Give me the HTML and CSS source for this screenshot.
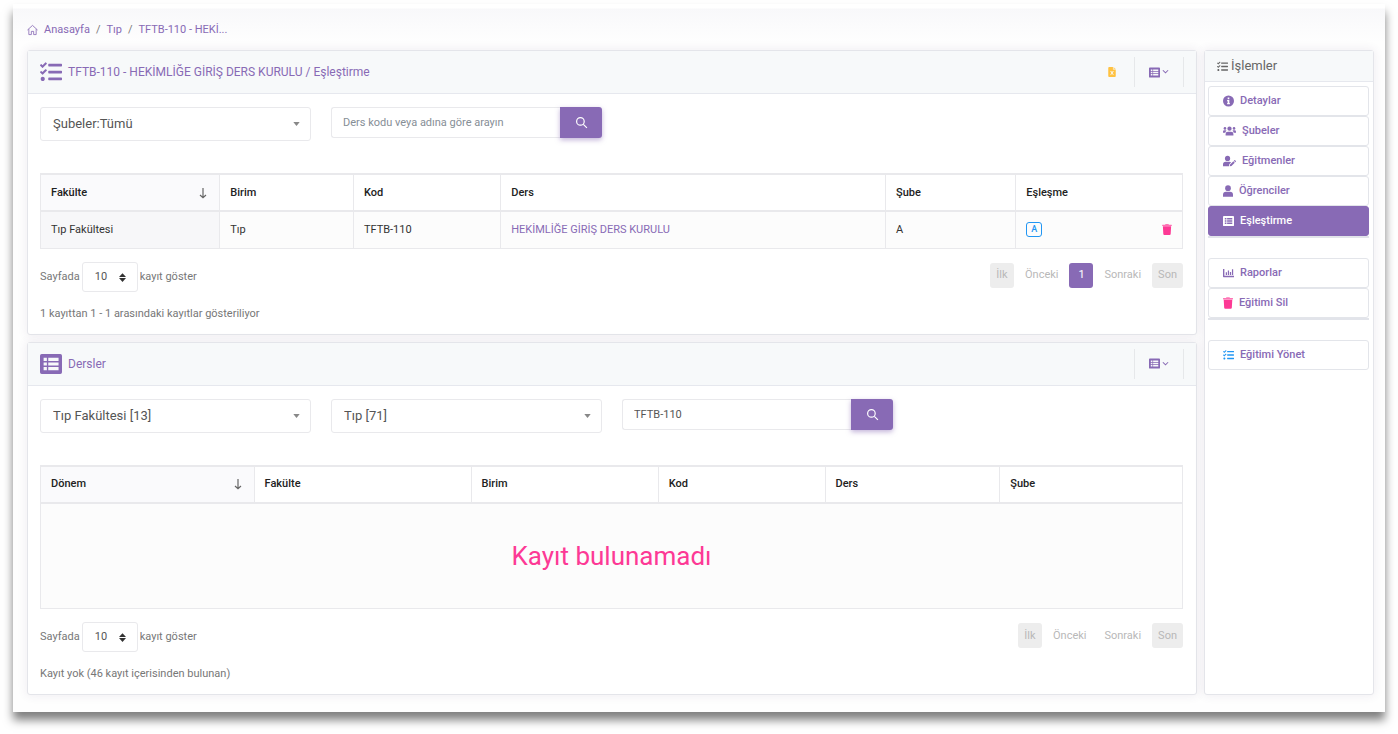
FILE: index.html
```html
<!DOCTYPE html>
<html lang="tr">
<head>
<meta charset="utf-8">
<title>TFTB-110 - Eşleştirme</title>
<link rel="stylesheet" href="styles.css">
</head>
<body>
<svg class="sprite" aria-hidden="true">
  <symbol id="i-list-alt" viewBox="0 0 512 512"><path fill-rule="evenodd" d="M40 24h432a40 40 0 0 1 40 40v384a40 40 0 0 1-40 40H40a40 40 0 0 1-40-40V64a40 40 0 0 1 40-40zM84 112v72h76v-72zm0 108v72h76v-72zm0 108v72h76v-72zM192 112v72h240v-72zm0 108v72h240v-72zm0 108v72h240v-72z"/></symbol>
  <symbol id="i-tasks" viewBox="0 0 512 512"><path d="M139.600 35.500a12 12 0 0 0-17 0L58.900 98.800l-22.700-22.100a12 12 0 0 0-17 0L3.500 92.400a12 12 0 0 0 0 17l47.600 47.400a12.800 12.800 0 0 0 17.600 0l15.600-15.600L156.500 69a12 12 0 0 0 0-17zm0 159.200a12 12 0 0 0-17 0l-63.700 63.700-22.700-22.100a12 12 0 0 0-17 0L3.500 252a12 12 0 0 0 0 17l47.600 47.600a12.800 12.800 0 0 0 17.600 0l87.800-88.100a12 12 0 0 0 0-17zM64 368c-26.500 0-48 21.500-48 48s21.500 48 48 48 48-21.500 48-48-21.500-48-48-48zm432 16H208a16 16 0 0 0-16 16v32a16 16 0 0 0 16 16h288a16 16 0 0 0 16-16v-32a16 16 0 0 0-16-16zm0-320H208a16 16 0 0 0-16 16v32a16 16 0 0 0 16 16h288a16 16 0 0 0 16-16V80a16 16 0 0 0-16-16zm0 160H208a16 16 0 0 0-16 16v32a16 16 0 0 0 16 16h288a16 16 0 0 0 16-16v-32a16 16 0 0 0-16-16z"/></symbol>
  <symbol id="i-trash" viewBox="0 0 448 512"><path d="M432 32H312l-9-19A24 24 0 0 0 281 0H167a24 24 0 0 0-22 13l-9 19H16A16 16 0 0 0 0 48v32a16 16 0 0 0 16 16h416a16 16 0 0 0 16-16V48a16 16 0 0 0-16-16z" opacity=".7"/><path d="M32 110l21 357a48 48 0 0 0 48 45h246a48 48 0 0 0 48-45l21-357z"/></symbol>
  <symbol id="i-search" viewBox="0 0 24 24"><path d="M10 3a7 7 0 1 0 0 14 7 7 0 0 0 0-14zM15 15l7 7" fill="none" stroke="currentColor" stroke-width="2.200"/></symbol>
  <symbol id="i-caret" viewBox="0 0 8 5"><path d="M0 0h8L4 5z"/></symbol>
  <symbol id="i-sort" viewBox="0 0 8 10"><path d="M4 0l4 4.400H0zM4 10L0 5.600h8z"/></symbol>
  <symbol id="i-arrow" viewBox="0 0 8 12"><path d="M4 1v9.500M1 8l3 2.800L7 8" fill="none" stroke="currentColor" stroke-width="1.200"/></symbol>
  <symbol id="i-chevron" viewBox="0 0 8 6"><path d="M1 1l3 3 3-3" fill="none" stroke="currentColor" stroke-width="1.200"/></symbol>
</svg>
<div class="sheet">
  <nav class="crumbs" aria-label="Konum">
    <svg class="crumb-home" viewBox="0 0 24 24"><path d="M1 12L12 2l11 10M4 10v12h5.500v-7h5v7H20V10" fill="none" stroke="currentColor" stroke-width="1.800" stroke-linejoin="round"/></svg>
    <a href="#">Anasayfa</a><span>/</span><a href="#">Tıp</a><span>/</span><a href="#">TFTB-110 - HEKİ...</a>
  </nav>
  <div class="layout">
    <main class="main">
      <section class="card">
        <header class="card-head">
          <svg class="head-icon"><use href="#i-tasks"/></svg>
          <h2>TFTB-110 - HEKİMLİĞE GİRİŞ DERS KURULU / Eşleştirme</h2>
          <div class="tools">
            <button class="tool-export" type="button" aria-label="Excel"><svg viewBox="0 0 384 512"><path fill-rule="evenodd" d="M48 0h192v128h144v336a48 48 0 0 1-48 48H48a48 48 0 0 1-48-48V48A48 48 0 0 1 48 0zM100 210l62 94-66 98h54l42-66 42 66h54l-66-98 62-94h-52l-40 62-40-62z"/><path d="M264 0l120 104h-120z" opacity=".7"/></svg></button>
            <button class="tool-menu" type="button" aria-label="Menü"><svg class="menu-list"><use href="#i-list-alt"/></svg><svg class="menu-chev"><use href="#i-chevron"/></svg></button>
          </div>
        </header>
        <div class="card-body">
          <form class="filters">
            <div class="pick"><select aria-label="Şubeler"><option>Şubeler:Tümü</option></select><svg><use href="#i-caret"/></svg></div>
            <div class="search"><input type="text" aria-label="Ders ara" placeholder="Ders kodu veya adına göre arayın"><button type="button" aria-label="Ara"><svg><use href="#i-search"/></svg></button></div>
          </form>
          <table class="grid grid-match">
            <colgroup><col class="m1"><col class="m2"><col class="m3"><col class="m4"><col class="m5"><col class="m6"></colgroup>
            <thead><tr><th class="sorted"><div class="spread">Fakülte<svg class="arrow"><use href="#i-arrow"/></svg></div></th><th>Birim</th><th>Kod</th><th>Ders</th><th>Şube</th><th>Eşleşme</th></tr></thead>
            <tbody><tr><td class="sorted">Tıp Fakültesi</td><td>Tıp</td><td>TFTB-110</td><td><a href="#">HEKİMLİĞE GİRİŞ DERS KURULU</a></td><td>A</td><td><div class="spread"><span class="tag">A</span><button class="del" type="button" aria-label="Sil"><svg><use href="#i-trash"/></svg></button></div></td></tr></tbody>
          </table>
          <div class="table-foot">
            <label class="length">Sayfada <span class="pick-small"><select><option>10</option></select><svg><use href="#i-sort"/></svg></span> kayıt göster</label>
            <div class="pager"><button type="button" class="edge">İlk</button><button type="button">Önceki</button><button type="button" class="current">1</button><button type="button">Sonraki</button><button type="button" class="edge">Son</button></div>
          </div>
          <p class="info">1 kayıttan 1 - 1 arasındaki kayıtlar gösteriliyor</p>
        </div>
      </section>
      <section class="card grow">
        <header class="card-head">
          <svg class="head-icon"><use href="#i-list-alt"/></svg>
          <h2>Dersler</h2>
          <div class="tools">
            <button class="tool-menu" type="button" aria-label="Menü"><svg class="menu-list"><use href="#i-list-alt"/></svg><svg class="menu-chev"><use href="#i-chevron"/></svg></button>
          </div>
        </header>
        <div class="card-body">
          <form class="filters">
            <div class="pick"><select aria-label="Fakülte"><option>Tıp Fakültesi [13]</option></select><svg><use href="#i-caret"/></svg></div>
            <div class="pick"><select aria-label="Birim"><option>Tıp [71]</option></select><svg><use href="#i-caret"/></svg></div>
            <div class="search"><input type="text" aria-label="Ders ara" value="TFTB-110"><button type="button" aria-label="Ara"><svg><use href="#i-search"/></svg></button></div>
          </form>
          <table class="grid grid-courses">
            <colgroup><col class="c1"><col class="c2"><col class="c3"><col class="c4"><col class="c5"><col class="c6"></colgroup>
            <thead><tr><th class="sorted"><div class="spread">Dönem<svg class="arrow"><use href="#i-arrow"/></svg></div></th><th>Fakülte</th><th>Birim</th><th>Kod</th><th>Ders</th><th>Şube</th></tr></thead>
            <tbody><tr><td class="empty" colspan="6">Kayıt bulunamadı</td></tr></tbody>
          </table>
          <div class="table-foot">
            <label class="length">Sayfada <span class="pick-small"><select><option>10</option></select><svg><use href="#i-sort"/></svg></span> kayıt göster</label>
            <div class="pager"><button type="button" class="edge">İlk</button><button type="button">Önceki</button><button type="button">Sonraki</button><button type="button" class="edge">Son</button></div>
          </div>
          <p class="info">Kayıt yok (46 kayıt içerisinden bulunan)</p>
        </div>
      </section>
    </main>
    <aside class="side">
      <h3><svg><use href="#i-tasks"/></svg>İşlemler</h3>
      <div class="group ruled">
        <a href="#"><svg class="sq" viewBox="0 0 16 16"><path fill-rule="evenodd" d="M8 0a8 8 0 1 0 0 16A8 8 0 0 0 8 0zM6.800 3h2.400v2.400H6.800zM6 6.500h3.200V11H10v1.800H6V11h.8V8.300H6z"/></svg>Detaylar</a>
        <a href="#"><svg class="wide" viewBox="0 0 20 16"><circle cx="3" cy="4" r="2"/><circle cx="17" cy="4" r="2"/><circle cx="10" cy="4.500" r="3.300"/><path d="M0 10.500V9a2 2 0 0 1 2-2h2q1 0 1.500.6Q3.800 8.700 3.600 10.500zM20 10.500V9a2 2 0 0 0-2-2h-2q-1 0-1.500.6 1.700 1.100 1.900 2.900zM4 15v-2.500A3.500 3.500 0 0 1 7.500 9h5a3.500 3.500 0 0 1 3.500 3.500V15z"/></svg>Şubeler</a>
        <a href="#"><svg class="wide" viewBox="0 0 20 16"><circle cx="7" cy="4" r="4"/><path d="M0 16v-2.800A4.200 4.200 0 0 1 4.200 9h5.600q1.500 0 2.700 1l-2.800 2.900L9.300 16zM10.500 16l.4-2.500L16 8.400l2.100 2.100-5.100 5.100zM16.700 7.700l.8-.8q.6-.5 1.200 0l1 1q.5.600 0 1.200l-.8.8z"/></svg>Eğitmenler</a>
        <a href="#"><svg class="slim" viewBox="0 0 14 16"><circle cx="7" cy="4" r="4"/><path d="M0 16v-2.800A4.200 4.200 0 0 1 4.200 9h5.600a4.200 4.200 0 0 1 4.200 4.200V16z"/></svg>Öğrenciler</a>
        <a href="#" class="active" aria-current="page"><svg class="sq"><use href="#i-list-alt"/></svg>Eşleştirme</a>
      </div>
      <div class="group ruled">
        <a href="#"><svg class="sq" viewBox="0 0 16 16"><path d="M0 2h2v10h14v2H1a1 1 0 0 1-1-1zM4 7h1.800v4H4zM7 4.500h1.800V11H7zM10 6.500h1.800V11H10zM13 2.500h1.800V11H13z"/></svg>Raporlar</a>
        <a href="#"><svg class="slim pink"><use href="#i-trash"/></svg>Eğitimi Sil</a>
      </div>
      <div class="group">
        <a href="#"><svg class="sq blue"><use href="#i-tasks"/></svg>Eğitimi Yönet</a>
      </div>
    </aside>
  </div>
</div>
</body>
</html>
```
FILE: styles.css
```css
* { box-sizing: border-box; }
:root {
  --purple: #886ab5;
  --line: #e9e9ec;
  --pink: #fd3995;
  --blue: #2196f3;
}
body {
  margin: 0;
  min-height: 100vh;
  padding: 4px 13px 22px;
  display: flex;
  background: #fff;
  color: #333;
  font: 11px/16px Roboto, "Noto Sans", sans-serif;
}
svg { fill: currentColor; flex: none; display: block; }
.sprite { position: absolute; width: 0; height: 0; }
a { color: var(--purple); text-decoration: none; }
h2, h3, p { margin: 0; font-weight: 400; }
button, input, select { font: inherit; color: inherit; margin: 0; }
button { border: 0; background: none; padding: 0; cursor: pointer; }

.sheet {
  flex: 1;
  display: flex;
  flex-direction: column;
  padding: 18px 11px 17px 14px;
  background: linear-gradient(#fff 0, #fff 4px, #f8f8fa 5px, #fefefe 38px);
  box-shadow: 0 8px 9px rgba(0, 0, 0, .5);
}
.crumbs { display: flex; align-items: center; gap: 6px; color: #777; }
.crumb-home { width: 11px; height: 12px; color: var(--purple); }
.layout {
  flex: 1;
  display: flex;
  gap: 7px;
  margin-top: 12px;
}
.main { flex: 1; min-width: 0; display: flex; flex-direction: column; gap: 7px; }
.card, .side {
  background: #fff;
  border: 1px solid #e4e5ea;
  border-radius: 3px;
  box-shadow: 0 0 10px 1px rgba(74, 53, 107, .08);
}
.grow { flex: 1; }
.card-head {
  display: flex;
  align-items: center;
  height: 43px;
  padding: 0 12px;
  background: #f7f9fa;
  border-bottom: 1px solid #e6e8ee;
  color: var(--purple);
}
.card-head h2 { font-size: 12px; margin-left: 6px; }
.head-icon { width: 22px; height: 22px; }
.tools { margin-left: auto; display: flex; align-items: center; gap: 18px; }
.tool-export { color: #ffc241; }
.tool-export svg { width: 8px; height: 10px; }
.tool-menu {
  display: flex;
  align-items: center;
  justify-content: center;
  gap: 2px;
  width: 50px;
  height: 30px;
  border: solid #e6e8ea;
  border-width: 0 1px;
}
.menu-list { width: 11px; height: 11px; }
.menu-chev { width: 7px; height: 6px; }
.card-body { padding: 13px 13px 12px 12px; }

.filters { display: flex; align-items: flex-start; gap: 20px; margin-bottom: 32px; }
.pick { position: relative; width: 271px; }
.pick select {
  appearance: none;
  width: 100%;
  height: 34px;
  padding: 0 12px;
  border: 1px solid var(--line);
  border-radius: 3px;
  background: #fff;
  color: #555;
  font-size: 13px;
}
.pick svg { position: absolute; right: 11px; top: 15px; width: 7px; height: 4px; color: #888; pointer-events: none; }
.search { display: flex; width: 271px; }
.search input {
  flex: 1;
  min-width: 0;
  height: 31px;
  padding: 0 11px;
  border: 1px solid var(--line);
  border-right: 0;
  border-radius: 3px 0 0 3px;
  color: #555;
  outline: 0;
}
.search input::placeholder { color: #868e96; opacity: 1; }
.search button {
  display: grid;
  place-items: center;
  width: 42px;
  height: 31px;
  border-radius: 0 3px 3px 0;
  background: var(--purple);
  color: #fff;
  box-shadow: 0 2px 5px rgba(136, 106, 181, .5);
}
.search svg { width: 13px; height: 13px; }

.grid { width: 100%; table-layout: fixed; border-collapse: collapse; border: 1px solid var(--line); border-top-width: 2px; }
.grid th, .grid td { height: 37px; padding: 0 10px; text-align: left; border-left: 1px solid var(--line); }
.grid th { font-weight: 500; color: #222; border-bottom: 2px solid var(--line); }
.grid td { background: #fcfcfc; }
.grid th.sorted { background: #fafafc; }
.grid td.sorted { background: #f7f7f9; }
.grid td.empty { height: 106px; text-align: center; color: var(--pink); font-size: 26px; font-weight: 400; }
.m1 { width: 15.700%; } .m2 { width: 11.700%; } .m3 { width: 12.900%; } .m4 { width: 33.700%; } .m5 { width: 11.400%; } .m6 { width: 14.600%; }
.c1 { width: 18.700%; } .c2 { width: 19%; } .c3 { width: 16.400%; } .c4 { width: 14.600%; } .c5 { width: 15.300%; } .c6 { width: 16%; }
.spread { display: flex; align-items: center; justify-content: space-between; }
.arrow { width: 8px; height: 14px; color: #666; margin-right: 2px; }
.tag {
  width: 16px;
  height: 15px;
  border: 1px solid var(--blue);
  border-radius: 3px;
  color: var(--blue);
  font-size: 9px;
  font-weight: 500;
  line-height: 13px;
  text-align: center;
}
.del { color: var(--pink); }
.del svg { width: 10px; height: 11px; }

.table-foot { display: flex; justify-content: space-between; align-items: flex-start; margin-top: 13px; color: #777; }
.length { display: flex; align-items: center; gap: 2px; }
.pick-small { position: relative; }
.pick-small select {
  appearance: none;
  display: block;
  width: 56px;
  height: 30px;
  padding: 0 12px;
  border: 1px solid var(--line);
  border-radius: 3px;
  background: #fff;
  color: #555;
}
.pick-small svg { position: absolute; right: 12px; top: 11px; width: 7px; height: 9px; color: #333; pointer-events: none; }
.pager { display: flex; gap: 4px; margin-top: 1px; }
.pager button { height: 25px; min-width: 24px; padding: 0 7px; border-radius: 3px; color: #b8b8b8; }
.pager .edge { padding: 0 6px; background: #ededed; }
.pager .current { background: var(--purple); color: #fff; }
.info { margin-top: 14px; color: #777; }

.side { width: 170px; }
.side h3 {
  display: flex;
  align-items: center;
  gap: 3px;
  height: 31px;
  padding: 0 12px;
  margin-bottom: 4px;
  background: #f7f9fa;
  border-bottom: 1px solid #e6e8ee;
  color: #666;
  font-size: 13px;
}
.side h3 svg { width: 11px; height: 11px; }
.group { margin: 0 4px 20px 3px; }
.ruled { border-bottom: 2px solid #e2e4ea; }
.group a {
  display: flex;
  align-items: center;
  gap: 6px;
  height: 30px;
  padding: 0 14px;
  border: 1px solid #e3e5ea;
  border-radius: 3px;
  font-weight: 500;
}
.group .active { background: var(--purple); border-color: var(--purple); color: #fff; }
.sq { width: 11px; height: 12px; }
.wide { width: 13px; height: 12px; }
.slim { width: 10px; height: 12px; }
.pink { color: var(--pink); }
.blue { color: var(--blue); }
```
